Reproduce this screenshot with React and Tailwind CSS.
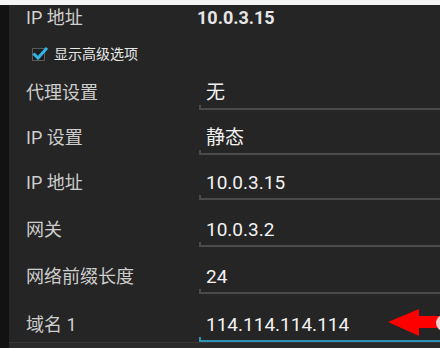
import React from "react";

const font = { fontFamily: "Roboto, 'Noto Sans CJK SC', sans-serif" };

function Field({ label, value, h, focused }) {
  const line = focused ? "bg-[#2f93b5]" : "bg-[#4a4a4a]";
  return (
    <div className={`flex items-end ${h}`}>
      <div className="w-[190px] pl-[17px] pb-[5px] text-[18px] leading-[24px] text-[#cdcdcd]">{label}</div>
      <div className="relative flex-1">
        <div className="pl-[7px] pb-[3px] text-[19px] leading-[24px] text-[#f2f2f2]">{value}</div>
        <div className={`h-[2px] w-full ${line}`} />
        <div className={`absolute left-0 bottom-0 w-[2px] h-[5px] ${line}`} />
      </div>
    </div>
  );
}

export default function App() {
  return (
    <div className="w-[440px] h-[348px] overflow-hidden bg-[#252525] flex flex-col" style={font}>
      <div className="h-[5px] bg-[#f4f4f4] shrink-0" />
      <div className="flex flex-1 min-h-0">
        <div className="w-[9px] bg-[#121212] shrink-0" />
        <div className="flex-1 flex flex-col relative">
          <div className="flex items-center h-[25px]">
            <div className="w-[188px] pl-[17px] text-[18px] text-[#d0d0d0] leading-[22px]">IP 地址</div>
            <div className="text-[18px] font-bold text-[#e6e6e6] leading-[22px]">10.0.3.15</div>
          </div>
          <div className="flex items-center h-[48px] pl-[23px] gap-[9px]">
            <div className="relative w-[13px] h-[13px] border border-[#5a5a5a] bg-[#1e1e1e]">
              <svg viewBox="0 0 16 16" className="absolute -left-[1px] -top-[3px] w-[16px] h-[16px]">
                <path d="M2.5 8.5 L6 12 L14 3" fill="none" stroke="#33b5e5" strokeWidth="3" strokeLinecap="square" />
              </svg>
            </div>
            <div className="text-[14px] text-[#e8e8e8] leading-[20px]">显示高级选项</div>
          </div>
          <Field label="代理设置" value="无" h="h-[32px]" />
          <Field label="IP 设置" value="静态" h="h-[45px]" />
          <Field label="IP 地址" value="10.0.3.15" h="h-[45px]" />
          <Field label="网关" value="10.0.3.2" h="h-[47px]" />
          <Field label="网络前缀长度" value="24" h="h-[47px]" />
          <Field label="域名 1" value="114.114.114.114" h="h-[48px]" focused />
          <div className="flex-1 border-t border-[#363636] bg-[#2a2a2a]" />
          <svg className="absolute left-[379px] top-[300px] w-[52px] h-[32px]" viewBox="0 0 52 32">
            <polygon points="0,17 31,4 31,11 52,11 52,23 31,23 31,31" fill="#ff0000" />
          </svg>
          <div className="absolute left-[427px] top-[310px] w-[10px] h-[16px] rounded-l-full bg-[#f0d0d0]" />
        </div>
      </div>
    </div>
  );
}
